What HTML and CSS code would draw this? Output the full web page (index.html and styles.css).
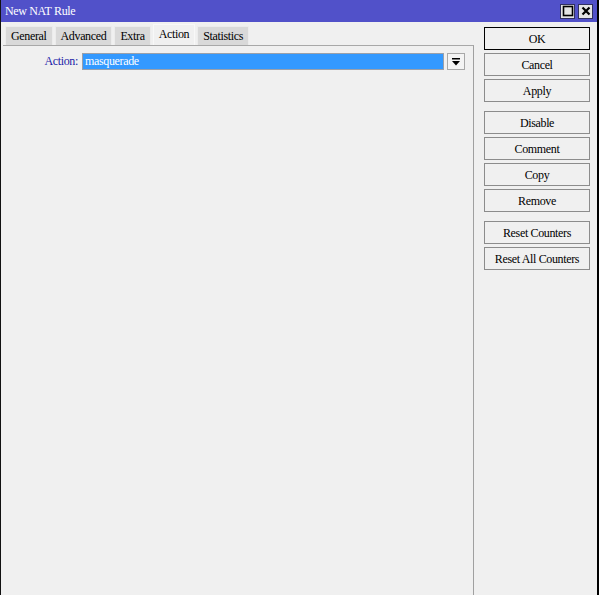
FILE: index.html
```html
<!DOCTYPE html>
<html>
<head>
<meta charset="utf-8">
<link rel="stylesheet" href="styles.css">
</head>
<body>
<div class="window">
  <div class="titlebar">
    <span class="title">New NAT Rule</span>
    <div class="tbtns">
      <span class="tbtn"><svg width="12" height="12" viewBox="0 0 12 12"><rect x="1.5" y="1.5" width="9" height="9" fill="none" stroke="#000" stroke-width="1.6"/></svg></span>
      <span class="tbtn"><svg width="12" height="12" viewBox="0 0 12 12"><path d="M2.5 2.5 L9.5 9.5 M9.5 2.5 L2.5 9.5" stroke="#000" stroke-width="2.2"/></svg></span>
    </div>
  </div>
  <div class="content">
    <div class="main">
      <div class="tabs">
        <span class="tab">General</span>
        <span class="tab">Advanced</span>
        <span class="tab">Extra</span>
        <span class="tab active">Action</span>
        <span class="tab">Statistics</span>
      </div>
      <div class="panel">
        <div class="row">
          <span class="label">Action:</span>
          <span class="field">masquerade</span>
          <span class="drop"><svg width="10" height="10" viewBox="0 0 10 10"><rect x="1" y="1" width="8" height="1.5" fill="#000"/><path d="M1 4 H9 L5 8.5 Z" fill="#000"/></svg></span>
        </div>
      </div>
    </div>
    <div class="side">
      <div class="group">
        <span class="btn default">OK</span>
        <span class="btn">Cancel</span>
        <span class="btn">Apply</span>
      </div>
      <div class="group">
        <span class="btn">Disable</span>
        <span class="btn">Comment</span>
        <span class="btn">Copy</span>
        <span class="btn">Remove</span>
      </div>
      <div class="group">
        <span class="btn">Reset Counters</span>
        <span class="btn">Reset All Counters</span>
      </div>
    </div>
  </div>
</div>
</body>
</html>
```
FILE: styles.css
```css
html, body {
  margin: 0;
  padding: 0;
  background: #ffffff;
}
body {
  font-family: "Liberation Serif", "Times New Roman", serif;
  font-size: 12px;
  letter-spacing: -0.35px;
  color: #000;
}
.window {
  width: 596px;
  height: 595px;
  border-left: 1px solid #111;
  border-right: 2px solid #000;
  background: #f0f0f0;
  display: flex;
  flex-direction: column;
  overflow: hidden;
}
.titlebar {
  height: 22px;
  flex: none;
  background: #5151c9;
  color: #fff;
  display: flex;
  align-items: center;
  justify-content: space-between;
  padding: 0 4px 0 4px;
}
.title {
  padding-top: 1px;
}
.tbtns {
  display: flex;
  gap: 3px;
}
.tbtn {
  width: 13px;
  height: 13px;
  background: #e4e4e4;
  border: 1px solid #303060;
  display: flex;
  align-items: center;
  justify-content: center;
}
.content {
  flex: 1;
  display: flex;
}
.main {
  width: 471px;
  padding-left: 2px;
  display: flex;
  flex-direction: column;
}
.tabs {
  display: flex;
  gap: 2px;
  padding-left: 2px;
  padding-top: 3px;
  height: 20px;
  align-items: flex-end;
}
.tab {
  height: 18px;
  line-height: 18px;
  padding: 0 5px;
  background: #d9d9d9;
  border: 1px solid #ececec;
  border-bottom: none;
}
.tab.active {
  background: #f0f0f0;
  height: 20px;
  line-height: 18px;
  border-color: #f8f8f8;
  padding: 0 5px;
}
.panel {
  flex: 1;
  border-top: 1px solid #a8a8a8;
  border-right: 1px solid #a0a0a0;
  padding-top: 7px;
}
.row {
  display: flex;
  align-items: center;
  height: 17px;
}
.label {
  width: 75px;
  text-align: right;
  color: #1c1ca8;
  padding-right: 4px;
}
.field {
  width: 358px;
  height: 15px;
  line-height: 15px;
  background: #3399ff;
  color: #fff;
  border: 1px solid #9aa0aa;
  padding-left: 2px;
}
.drop {
  margin-left: 3px;
  width: 16px;
  height: 15px;
  border: 1px solid #a8a8a8;
  background: #f4f4f4;
  display: flex;
  align-items: center;
  justify-content: center;
}
.side {
  padding-left: 10px;
  padding-top: 5px;
  display: flex;
  flex-direction: column;
  gap: 9px;
}
.group {
  display: flex;
  flex-direction: column;
  gap: 3px;
}
.btn {
  width: 104px;
  height: 21px;
  line-height: 22px;
  text-align: center;
  border: 1px solid #8c8c8c;
  background: #f0f0f0;
}
.btn.default {
  border-color: #000;
}
```
